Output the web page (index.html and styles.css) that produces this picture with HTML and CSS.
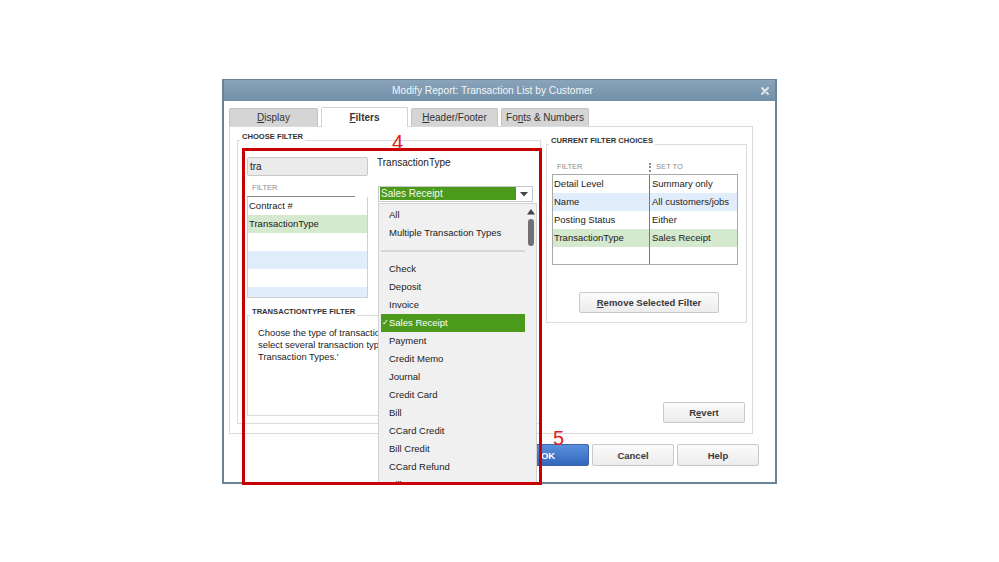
FILE: index.html
```html
<!DOCTYPE html>
<html>
<head>
<meta charset="utf-8">
<title>Modify Report</title>
<link rel="stylesheet" href="styles.css">
</head>
<body>
<div class="stage">
  <div class="window">
    <div class="titlebar">
      <span></span>
      <span class="title">Modify Report: Transaction List by Customer</span>
      <span class="close"><svg width="8" height="8" viewBox="0 0 8 8"><path d="M1 1L7 7M7 1L1 7" stroke="#dde4ea" stroke-width="2" stroke-linecap="round"/></svg></span>
    </div>
    <div class="tabs">
      <div class="tab t1"><u>D</u>isplay</div>
      <div class="tab t2 active"><u>F</u>ilters</div>
      <div class="tab t3"><u>H</u>eader/Footer</div>
      <div class="tab t4">Fo<u>n</u>ts &amp; Numbers</div>
    </div>
    <div class="panel">
      <div class="group choose">
        <div class="group-title outer-title">CHOOSE FILTER</div>
        <div class="choose-top">
          <div class="filter-col">
            <div class="search">tra</div>
            <div class="list-head">FILTER</div>
            <div class="filter-list">
              <div class="row">Contract #</div>
              <div class="row green">TransactionType</div>
              <div class="row"></div>
              <div class="row blue"></div>
              <div class="row"></div>
              <div class="row blue"></div>
            </div>
          </div>
          <div class="value-col">
            <div class="value-label">TransactionType</div>
            <div class="combo">
              <span class="combo-value">Sales Receipt</span>
              <span class="combo-btn"><svg width="8" height="5" viewBox="0 0 8 5"><path d="M0 0H8L4 4.5Z" fill="#444"/></svg></span>
            </div>
          </div>
        </div>
        <div class="group desc">
          <div class="group-title">TRANSACTIONTYPE FILTER</div>
          <p class="desc-text">Choose the type of transaction you want to<br>select several transaction types, choose 'Multiple<br>Transaction Types.'</p>
        </div>
      </div>
      <div class="right-col">
        <div class="group current">
          <div class="group-title">CURRENT FILTER CHOICES</div>
          <div class="cur-head">
            <span class="h1">FILTER</span>
            <span class="h2"><i class="sep"></i>SET TO</span>
          </div>
          <div class="cur-table">
            <div class="c1">Detail Level</div><div class="c2">Summary only</div>
            <div class="c1 blue">Name</div><div class="c2 blue">All customers/jobs</div>
            <div class="c1">Posting Status</div><div class="c2">Either</div>
            <div class="c1 green">TransactionType</div><div class="c2 green">Sales Receipt</div>
            <div class="c1"></div><div class="c2"></div>
          </div>
          <button class="btn remove"><u>R</u>emove Selected Filter</button>
        </div>
        <button class="btn revert">R<u>e</u>vert</button>
      </div>
    </div>
    <div class="actions">
      <button class="btn ok">OK</button>
      <button class="btn">Cancel</button>
      <button class="btn">Help</button>
    </div>
  </div>

  <div class="popup">
    <div class="opts">
      <div class="opt"><span class="chk"></span>All</div>
      <div class="opt"><span class="chk"></span>Multiple Transaction Types</div>
      <div class="opt-sep"></div>
      <div class="opt"><span class="chk"></span>Check</div>
      <div class="opt"><span class="chk"></span>Deposit</div>
      <div class="opt"><span class="chk"></span>Invoice</div>
      <div class="opt sel"><span class="chk">✓</span>Sales Receipt</div>
      <div class="opt"><span class="chk"></span>Payment</div>
      <div class="opt"><span class="chk"></span>Credit Memo</div>
      <div class="opt"><span class="chk"></span>Journal</div>
      <div class="opt"><span class="chk"></span>Credit Card</div>
      <div class="opt"><span class="chk"></span>Bill</div>
      <div class="opt"><span class="chk"></span>CCard Credit</div>
      <div class="opt"><span class="chk"></span>Bill Credit</div>
      <div class="opt"><span class="chk"></span>CCard Refund</div>
      <div class="opt"><span class="chk"></span>Bill Payment</div>
    </div>
    <div class="vscroll">
      <svg class="up" width="8" height="6" viewBox="0 0 8 6"><path d="M0 5.5H8L4 0Z" fill="#444"/></svg>
      <div class="thumb"></div>
    </div>
  </div>

  <div class="redbox"></div>
  <div class="callout c4">4</div>
  <div class="callout c5">5</div>
</div>
</body>
</html>
```

FILE: styles.css
```css
html, body {
  margin: 0;
  background: #fff;
}
body {
  font-family: "Liberation Sans", Arial, sans-serif;
  font-size: 9.5px;
  color: #222;
}
.stage {
  position: relative;
  width: 999px;
  height: 562px;
  overflow: hidden;
  box-sizing: border-box;
  padding-top: 79px;
}
.window {
  margin-left: 222px;
  width: 555px;
  height: 405px;
  box-sizing: border-box;
  border: 2px solid #6b8398;
  border-top: 1px solid #6b8398;
  background: #fff;
  display: flex;
  flex-direction: column;
}
.titlebar {
  height: 21px;
  flex: 0 0 21px;
  background: linear-gradient(#8aa4ba, #7190a8);
  display: grid;
  grid-template-columns: 1fr auto 1fr;
  align-items: center;
  color: #f3f5f7;
  font-size: 10.2px;
}
.title {
  margin-right: 14px;
}
.close {
  justify-self: end;
  margin-right: 6px;
  display: flex;
}
.tabs {
  display: flex;
  gap: 3px;
  padding: 7px 0 0 5px;
  height: 18px;
  flex: 0 0 18px;
}
.tab {
  height: 18px;
  box-sizing: border-box;
  background: #d5d5d5;
  border: 1px solid #c4c4c4;
  border-bottom: none;
  border-radius: 2px 2px 0 0;
  text-align: center;
  line-height: 17px;
  font-size: 10px;
  color: #333;
}
.t1 { width: 89px; }
.t2 { width: 87px; }
.t3 { width: 87px; }
.t4 { width: 88px; }
.tab.active {
  background: #fff;
  height: 20px;
  margin-top: -1px;
  position: relative;
  z-index: 1;
  font-weight: bold;
  line-height: 19px;
  border-color: #d2d2d2;
}
.panel {
  margin-left: 5px;
  width: 524px;
  height: 308px;
  flex: 0 0 308px;
  box-sizing: border-box;
  border: 1px solid #dadada;
  padding: 13px 5px 0 7px;
  display: grid;
  grid-template-columns: 304px 201px;
  column-gap: 5px;
  align-items: start;
}
.group {
  border: 1px solid #dcdcdc;
  box-sizing: border-box;
}
.group-title {
  width: max-content;
  margin: -8px 0 0 2px;
  padding: 0 2px;
  background: #fff;
  font-size: 7.6px;
  line-height: 8px;
  height: 8px;
  font-weight: bold;
  color: #333;
}
.outer-title {
  margin-left: -7px;
}
.choose {
  height: 284px;
  padding: 0 8px 0 9px;
}
.choose-top {
  display: flex;
  gap: 9px;
  margin-top: 16px;
}
.filter-col {
  width: 121px;
  flex: 0 0 121px;
}
.search {
  height: 19px;
  box-sizing: border-box;
  border: 1px solid #c9c9c9;
  border-radius: 2px;
  background: #ebebeb;
  padding-left: 2px;
  line-height: 17px;
  font-size: 10px;
}
.list-head {
  margin-top: 3px;
  width: 108px;
  height: 18px;
  box-sizing: border-box;
  border-bottom: 1px solid #8c8c8c;
  padding-left: 5px;
  color: #8e8e8e;
  font-size: 7.6px;
  line-height: 17px;
}
.filter-list {
  height: 101px;
  box-sizing: border-box;
  border: 1px solid #cfcfcf;
  border-top: none;
  overflow: hidden;
}
.row {
  height: 18px;
  line-height: 18px;
  padding-left: 1px;
}
.green { background: #d4e9cd; }
.blue { background: #e2edfb; }
.value-col {
  flex: 1;
}
.value-label {
  line-height: 12px;
  font-size: 10px;
}
.combo {
  margin-top: 17px;
  margin-left: 1px;
  width: 155px;
  height: 16px;
  box-sizing: border-box;
  border: 1px solid #c8c8c8;
  display: flex;
  padding: 0 0 0 1px;
  background: #fff;
}
.combo-value {
  flex: 0 0 136px;
  height: 13px;
  background: #4c9a1c;
  color: #f4f9f0;
  font-size: 10px;
  line-height: 13px;
  padding-left: 1px;
  box-sizing: border-box;
}
.combo-btn {
  flex: 1;
  display: flex;
  align-items: center;
  justify-content: center;
}
.desc {
  margin-top: 17px;
  width: 285px;
  height: 101px;
}
.desc-text {
  margin: 11px 0 0 10px;
  width: 120px;
  overflow: hidden;
  font-size: 9.4px;
  line-height: 12px;
  white-space: nowrap;
}
.right-col {
  padding-top: 4px;
  display: flex;
  flex-direction: column;
  align-items: flex-end;
}
.current {
  width: 201px;
  height: 179px;
  align-self: flex-start;
}
.cur-head {
  margin: 15px 0 0 5px;
  width: 186px;
  height: 14px;
  display: grid;
  grid-template-columns: 97px 1fr;
  color: #8c8c8c;
  font-size: 7.6px;
  line-height: 14px;
}
.cur-head .h1 { padding-left: 5px; }
.cur-head .h2 {
  display: flex;
  align-items: center;
}
.sep {
  width: 0;
  height: 9px;
  border-left: 2px dotted #8a8a8a;
  margin: 0 5px 0 0;
}
.cur-table {
  margin-left: 5px;
  width: 186px;
  height: 91px;
  box-sizing: border-box;
  border: 1px solid #a9a9a9;
  display: grid;
  grid-template-columns: 97px 1fr;
  grid-auto-rows: 18px;
  overflow: hidden;
  font-size: 9.5px;
}
.cur-table div {
  line-height: 18px;
  white-space: nowrap;
  overflow: hidden;
}
.cur-table .c1 {
  border-right: 1px solid #7a7a7a;
  padding-left: 1px;
}
.cur-table .c2 {
  padding-left: 2px;
}
.btn {
  font-family: "Liberation Sans", Arial, sans-serif;
  font-size: 9.5px;
  font-weight: bold;
  color: #3a3a3a;
  background: linear-gradient(#fbfbfb, #ececec);
  border: 1px solid #c8c8c8;
  border-radius: 2px;
  padding: 0;
  box-sizing: border-box;
}
.remove {
  margin: 27px 0 0 32px;
  width: 140px;
  height: 21px;
  display: block;
}
.revert {
  margin: 79px 2px 0 0;
  width: 82px;
  height: 21px;
}
.actions {
  display: flex;
  justify-content: flex-end;
  gap: 3px;
  padding-right: 16px;
  margin-top: 10px;
}
.actions .btn {
  width: 82px;
  height: 22px;
}
.actions .ok {
  background: linear-gradient(#5a8fdc, #3467bd);
  border-color: #3b64a8;
  color: #fff;
}
.popup {
  position: absolute;
  left: 378px;
  top: 203px;
  width: 159px;
  height: 280px;
  box-sizing: border-box;
  border: 1px solid #d2d2d2;
  background: #f0f0f0;
  padding: 2px 0 0 2px;
  display: flex;
  overflow: hidden;
  font-weight: normal;
}
.opts {
  width: 144px;
  flex: 0 0 144px;
}
.opt {
  height: 18px;
  line-height: 18px;
  display: flex;
  font-size: 9.5px;
  font-weight: normal;
  color: #222;
}
.chk {
  width: 8px;
  flex: 0 0 8px;
  font-size: 8px;
  text-align: center;
}
.opt.sel {
  background: #4c9a1c;
  color: #fff;
}
.opt-sep {
  height: 2px;
  margin: 8px 0;
  background: #d8d8d8;
}
.vscroll {
  flex: 1;
  display: flex;
  flex-direction: column;
  align-items: center;
  padding-top: 3px;
}
.thumb {
  margin-top: 4px;
  width: 6px;
  height: 27px;
  border-radius: 3px;
  background: #717171;
}
.redbox {
  position: absolute;
  left: 242px;
  top: 148px;
  width: 300px;
  height: 337px;
  box-sizing: border-box;
  border: 3px solid #c80000;
}
.callout {
  position: absolute;
  color: #e0201c;
  font-size: 20px;
  line-height: 20px;
  font-family: "Liberation Sans", Arial, sans-serif;
}
.c4 { left: 392px; top: 132px; }
.c5 { left: 553px; top: 428px; }
```
